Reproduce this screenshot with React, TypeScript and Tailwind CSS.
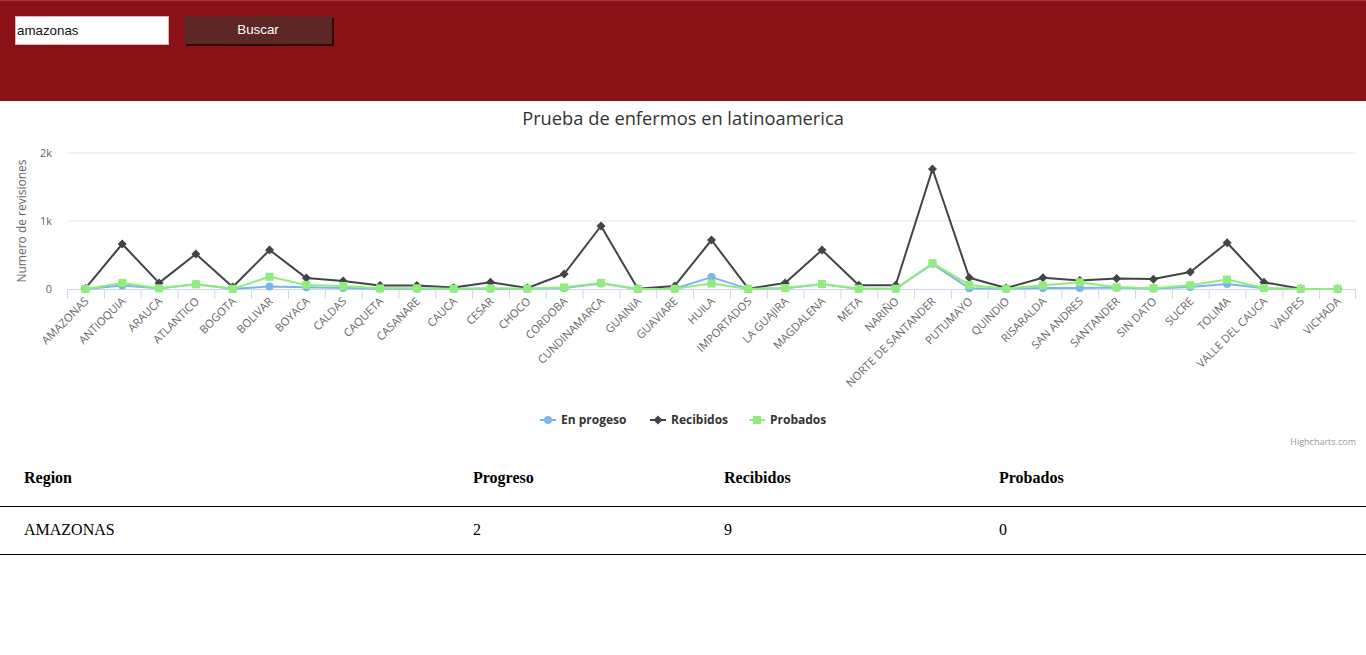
import { useState } from "react"

const regions = [
  "AMAZONAS", "ANTIOQUIA", "ARAUCA", "ATLANTICO", "BOGOTA", "BOLIVAR", "BOYACA", "CALDAS",
  "CAQUETA", "CASANARE", "CAUCA", "CESAR", "CHOCO", "CORDOBA", "CUNDINAMARCA", "GUAINIA",
  "GUAVIARE", "HUILA", "IMPORTADOS", "LA GUAJIRA", "MAGDALENA", "META", "NARIÑO",
  "NORTE DE SANTANDER", "PUTUMAYO", "QUINDIO", "RISARALDA", "SAN ANDRES", "SANTANDER",
  "SIN DATO", "SUCRE", "TOLIMA", "VALLE DEL CAUCA", "VAUPES", "VICHADA",
]

const recibidos = [9, 662, 90, 515, 30, 574, 160, 118, 50, 50, 20, 100, 15, 220, 926, 5, 45, 720, 5, 90, 574, 55, 55, 1765, 165, 15, 165, 125, 155, 145, 250, 680, 100, 3, 2]
const probados = [0, 90, 10, 70, 3, 180, 60, 45, 10, 10, 5, 10, 5, 25, 90, 2, 5, 80, 2, 15, 75, 5, 5, 380, 60, 5, 55, 100, 25, 10, 55, 140, 15, 1, 2]
const progreso = [2, 50, 10, 70, 3, 35, 25, 15, 5, 5, 3, 5, 3, 15, 80, 1, 3, 175, 1, 10, 70, 3, 3, 370, 10, 3, 15, 15, 20, 8, 30, 75, 10, 1, 1]

// chart geometry (svg coords)
const W = 1366
const H = 355
const plotLeft = 67
const plotWidth = 1289
const zeroY = 188
const perK = 68
const step = plotWidth / regions.length

const cx = (i: number) => plotLeft + step * (i + 0.5)
const vy = (v: number) => zeroY - (v / 1000) * perK

function linePath(data: number[]) {
  return data.map((v, i) => `${i === 0 ? "M" : "L"}${cx(i).toFixed(1)},${vy(v).toFixed(1)}`).join(" ")
}

function Diamond({ x, y }: { x: number; y: number }) {
  return <path d={`M${x},${y - 4.5} L${x + 4.5},${y} L${x},${y + 4.5} L${x - 4.5},${y} Z`} fill="#434348" />
}

function Chart() {
  const font = "'Open Sans', 'Liberation Sans', sans-serif"
  return (
    <svg width={W} height={H} viewBox={`0 0 ${W} ${H}`} className="block" style={{ fontFamily: font }}>
      <text x={683} y={24} textAnchor="middle" fontSize={18.3} fill="#333333">
        Prueba de enfermos en latinoamerica
      </text>

      {/* grid */}
      {[2000, 1000].map((v) => (
        <line key={v} x1={plotLeft} x2={plotLeft + plotWidth} y1={vy(v)} y2={vy(v)} stroke="#e6e6e6" strokeWidth={1} />
      ))}
      <line x1={plotLeft} x2={plotLeft + plotWidth} y1={zeroY + 0.5} y2={zeroY + 0.5} stroke="#ccd6eb" strokeWidth={1} />
      {regions.map((_, i) => (
        <line key={i} x1={plotLeft + step * i + 0.5} x2={plotLeft + step * i + 0.5} y1={zeroY} y2={zeroY + 10} stroke="#ccd6eb" />
      ))}
      <line x1={plotLeft + plotWidth - 0.5} x2={plotLeft + plotWidth - 0.5} y1={zeroY} y2={zeroY + 10} stroke="#ccd6eb" />

      {/* y labels */}
      {[
        ["2k", 2000],
        ["1k", 1000],
        ["0", 0],
      ].map(([t, v]) => (
        <text key={t} x={52} y={vy(v as number) + 4} textAnchor="end" fontSize={11} fill="#666666">
          {t}
        </text>
      ))}
      <text x={0} y={0} transform="translate(26,120) rotate(-90)" textAnchor="middle" fontSize={12} fill="#666666">
        Numero de revisiones
      </text>

      {/* x labels */}
      {regions.map((r, i) => (
        <text
          key={r}
          x={0}
          y={0}
          transform={`translate(${(cx(i) + 4).toFixed(1)},${zeroY + 13}) rotate(-45)`}
          textAnchor="end"
          fontSize={11.2}
          fill="#666666"
        >
          {r}
        </text>
      ))}

      {/* series */}
      <path d={linePath(progreso)} fill="none" stroke="#7cb5ec" strokeWidth={2} strokeLinejoin="round" />
      {progreso.map((v, i) => (
        <circle key={i} cx={cx(i)} cy={vy(v)} r={4} fill="#7cb5ec" />
      ))}
      <path d={linePath(recibidos)} fill="none" stroke="#434348" strokeWidth={2} strokeLinejoin="round" />
      {recibidos.map((v, i) => (
        <Diamond key={i} x={cx(i)} y={vy(v)} />
      ))}
      <path d={linePath(probados)} fill="none" stroke="#90ed7d" strokeWidth={2} strokeLinejoin="round" />
      {probados.map((v, i) => (
        <rect key={i} x={cx(i) - 4} y={vy(v) - 4} width={8} height={8} fill="#90ed7d" />
      ))}

      {/* legend */}
      <g fontSize={12} fontWeight="bold" fill="#333333">
        <line x1={540} x2={556} y1={319} y2={319} stroke="#7cb5ec" strokeWidth={2} />
        <circle cx={548} cy={319} r={4} fill="#7cb5ec" />
        <text x={561} y={323}>En progeso</text>

        <line x1={650} x2={666} y1={319} y2={319} stroke="#434348" strokeWidth={2} />
        <Diamond x={658} y={319} />
        <text x={671} y={323}>Recibidos</text>

        <line x1={749} x2={765} y1={319} y2={319} stroke="#90ed7d" strokeWidth={2} />
        <rect x={753} y={315} width={8} height={8} fill="#90ed7d" />
        <text x={770} y={323}>Probados</text>
      </g>

      <text x={1356} y={344} textAnchor="end" fontSize={9} fill="#999999">
        Highcharts.com
      </text>
    </svg>
  )
}

export default function App() {
  const [query, setQuery] = useState("amazonas")

  return (
    <div className="w-full min-h-screen bg-white">
      {/* Search bar */}
      <header className="h-[101px] bg-[#8a1214] border-t border-[#a33a3a] px-[15px] pt-[15px]">
        <div className="flex items-start gap-[15px]">
          <input
            value={query}
            onChange={(e) => setQuery(e.target.value)}
            className="w-[154px] h-[29px] bg-white border border-[#d8b5b5] px-[1px] text-[13.33px] text-[#111] outline-none font-['Liberation_Sans',Arial,sans-serif]"
          />
          <button className="w-[148px] h-[28px] bg-[#5e2626] text-white text-[13.33px] shadow-[2px_2px_0_#260808] font-['Liberation_Sans',Arial,sans-serif]">
            Buscar
          </button>
        </div>
      </header>

      {/* Chart */}
      <Chart />

      {/* Table */}
      <table className="w-full border-collapse font-['Liberation_Serif','Times_New_Roman',serif] text-[16px] leading-[18px] text-black">
        <thead>
          <tr className="border-b border-black">
            <th className="w-[449px] text-left font-bold pl-6 pt-[13px] pb-[19px]">Region</th>
            <th className="w-[251px] text-left font-bold pl-6 pt-[13px] pb-[19px]">Progreso</th>
            <th className="w-[275px] text-left font-bold pl-6 pt-[13px] pb-[19px]">Recibidos</th>
            <th className="text-left font-bold pl-6 pt-[13px] pb-[19px]">Probados</th>
          </tr>
        </thead>
        <tbody>
          <tr className="border-b border-black">
            <td className="pl-6 pt-[14px] pb-[15px]">AMAZONAS</td>
            <td className="pl-6 pt-[14px] pb-[15px]">2</td>
            <td className="pl-6 pt-[14px] pb-[15px]">9</td>
            <td className="pl-6 pt-[14px] pb-[15px]">0</td>
          </tr>
        </tbody>
      </table>
    </div>
  )
}
